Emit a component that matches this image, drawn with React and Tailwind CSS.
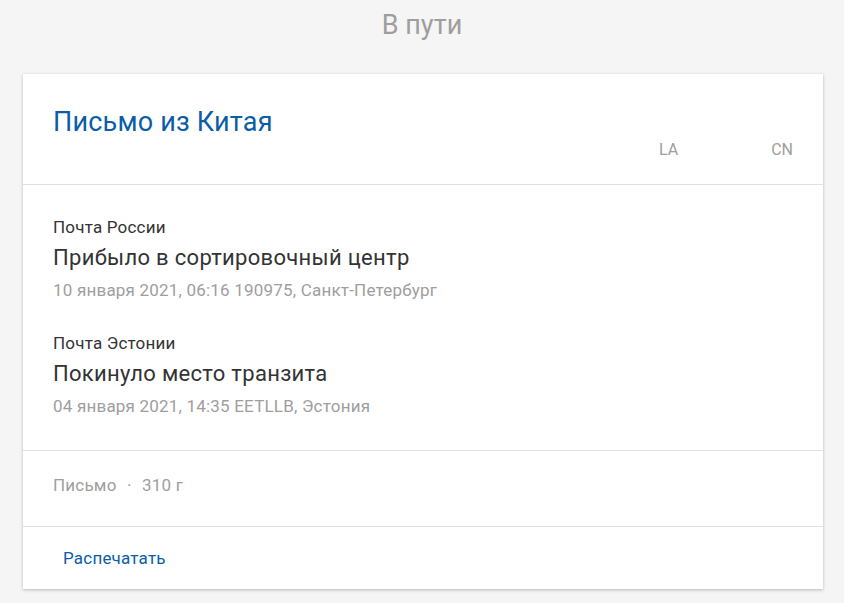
import React from 'react';

const events = [
    { carrier: 'Почта России', status: 'Прибыло в сортировочный центр', details: '10 января 2021, 06:16 190975, Санкт-Петербург' },
    { carrier: 'Почта Эстонии', status: 'Покинуло место транзита', details: '04 января 2021, 14:35 EETLLB, Эстония' },
];

const App = () => {
    return (
        <div className="min-h-[603px] bg-[#f5f5f5] font-['Roboto',sans-serif] pt-[8px]">
            <h1 className="text-center text-[27px] leading-[34px] text-[#9e9e9e]">В пути</h1>

            <div className="ml-[23px] mr-[21px] mt-[32px] bg-white shadow-[0_1px_3px_rgba(0,0,0,0.25)]">
                <div className="px-[30px] pt-[32px] pb-[22px] border-b border-[#e0e0e0]">
                    <h2 className="text-[27px] leading-[32px] tracking-[0.2px] text-[#0a5da6]">Письмо из Китая</h2>
                    <div className="flex justify-end">
                        <div className="flex w-[134px] justify-between text-[16px] leading-[24px] text-[#9e9e9e]">
                            <span>LA</span>
                            <span>CN</span>
                        </div>
                    </div>
                </div>

                <div className="px-[30px] pt-[30px] pb-[32px] border-b border-[#e0e0e0] flex flex-col gap-[29px]">
                    {events.map((ev) => (
                        <div key={ev.status}>
                            <div className="text-[17px] leading-[24px] tracking-[0.2px] text-[#333]">{ev.carrier}</div>
                            <div className="mt-[5px] text-[22px] leading-[28px] tracking-[0.3px] text-[#333]">{ev.status}</div>
                            <div className="mt-[6px] text-[17px] leading-[24px] tracking-[0.2px] text-[#9e9e9e]">{ev.details}</div>
                        </div>
                    ))}
                </div>

                <div className="px-[30px] pt-[22px] pb-[29px] border-b border-[#e0e0e0] text-[17px] leading-[24px] tracking-[0.2px] text-[#9e9e9e]">
                    Письмо <span className="mx-[6px]">·</span> 310 г
                </div>

                <div className="px-[40px] pt-[19px] pb-[18px]">
                    <button className="text-[17px] leading-[24px] tracking-[0.2px] text-[#0a5da6]">Распечатать</button>
                </div>
            </div>
        </div>
    );
};

export default App;
